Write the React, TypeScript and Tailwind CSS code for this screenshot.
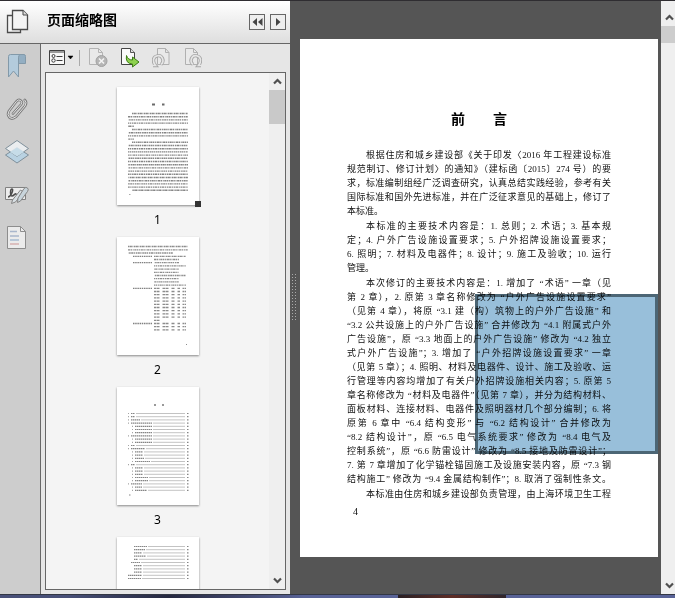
import React, { useState } from 'react';

// One entry per printed line: the document keeps its own line breaks.
const PARAGRAPHS: string[][] = [
  [
    '根据住房和城乡建设部《关于印发〈2016 年工程建设标准',
    '规范制订、修订计划〉的通知》（建标函〔2015〕274 号）的要',
    '求，标准编制组经广泛调查研究，认真总结实践经验，参考有关',
    '国际标准和国外先进标准，并在广泛征求意见的基础上，修订了',
    '本标准。',
  ],
  [
    '本标准的主要技术内容是：1. 总则；2. 术语；3. 基本规',
    '定；4. 户外广告设施设置要求；5. 户外招牌设施设置要求；',
    '6. 照明；7. 材料及电器件；8. 设计；9. 施工及验收；10. 运行',
    '管理。',
  ],
  [
    '本次修订的主要技术内容是：1. 增加了 “术语” 一章（见',
    '第 2 章），2. 原第 3 章名称修改为 “户外广告设施设置要求”',
    '（见第 4 章），将原 “3.1 建（构）筑物上的户外广告设施” 和',
    '“3.2 公共设施上的户外广告设施” 合并修改为 “4.1 附属式户外',
    '广告设施”，原 “3.3 地面上的户外广告设施” 修改为 “4.2 独立',
    '式户外广告设施”；3. 增加了 “户外招牌设施设置要求” 一章',
    '（见第 5 章）；4. 照明、材料及电器件、设计、施工及验收、运',
    '行管理等内容均增加了有关户外招牌设施相关内容；5. 原第 5',
    '章名称修改为 “材料及电器件”（见第 7 章），并分为结构材料、',
    '面板材料、连接材料、电器件及照明器材几个部分编制；6. 将',
    '原第 6 章中 “6.4 结构变形” 与 “6.2 结构设计” 合并修改为',
    '“8.2 结构设计”，原 “6.5 电气系统要求” 修改为 “8.4 电气及',
    '控制系统”，原 “6.6 防雷设计” 修改为 “8.5 接地及防雷设计”；',
    '7. 第 7 章增加了化学锚栓锚固施工及设施安装内容，原 “7.3 钢',
    '结构施工” 修改为 “9.4 金属结构制作”；8. 取消了强制性条文。',
  ],
  ['本标准由住房和城乡建设部负责管理，由上海环境卫生工程'],
];

const DASHES = ['1.5 .4 2 .5 1 .6', '1 .6 2.2 .5 1.4 .7', '2 .5 1.2 .8 1.6 .5', '1.2 .7 1.5 .5 2.4 .6'];

function PagesIcon() {
  return (
    <svg width="24" height="26" viewBox="0 0 24 26" fill="#f4f4f4" stroke="#4b4b4b" strokeWidth="1.3">
      <path d="M2.5 6.5h13v17h-13z" />
      <path d="M7.5 1.5h10.500l4.500 4.500v14.500h-15z" />
      <path d="M18 1.5v4.500h4.500" fill="#ddd" strokeWidth="1" />
    </svg>
  );
}

function BookmarkIcon() {
  return (
    <svg width="20" height="26" viewBox="0 0 20 26" stroke="#8299a9" strokeWidth="1">
      <path d="M4 1.500h13q1.500 0 1.500 2v7h-7V4" fill="#93aec2" />
      <path d="M1.500 24V3.500q0-2 2-2H13q-1.500 1-1.500 3V24l-5-6z" fill="#b3cbdc" />
    </svg>
  );
}

function ClipIcon() {
  const wire = 'M7 16.500 15 7.500q1.800-2.500-.3-4t-4.200.8L3 14q-2.200 4 .5 6.500t6.500-.7L19 9q2.300-3.600-.2-6';
  return (
    <svg width="22" height="24" viewBox="0 0 22 24" fill="none" strokeLinecap="round">
      <path d={wire} stroke="#7c7c7c" strokeWidth="2.600" />
      <path d={wire} stroke="#e2e2e2" strokeWidth="1" />
    </svg>
  );
}

function LayersIcon() {
  return (
    <svg width="26" height="26" viewBox="0 0 26 26" stroke="#7f909b" strokeLinejoin="round">
      <path d="M1.500 16 13 8.500 24.500 16 13 24z" fill="#b9d2e2" />
      <path d="M1.500 9.500 13 1.500l11.500 8L13 17.500z" fill="#eef2f4" fillOpacity=".85" />
      <path d="M6 13 13 8.500l7 4.500-7 4.500z" fill="#c6dce8" stroke="none" />
    </svg>
  );
}

function SignIcon() {
  return (
    <svg width="26" height="20" viewBox="0 0 26 20" fill="none">
      <path d="M1.500 2.500h20v12h-20z" fill="#ececec" stroke="#808080" />
      <path d="M4 12c3 0 6-8 4-8s-2 7 0 7 3-3 4-2 1 2 3 0" stroke="#4c4c4c" strokeWidth="1.500" />
      <path d="m8.500 15 8-10 3 2-8 10-4 1.500z" fill="#d8dfe3" stroke="#858585" />
      <path d="m14 13 6-9.500q2-2 3.500-.5t0 3.500l-7 9.500-3 1.500z" fill="#c8d4db" stroke="#858585" />
    </svg>
  );
}

function ContentIcon() {
  return (
    <svg width="22" height="24" viewBox="0 0 22 24" fill="none">
      <path d="M1.500.500h13l5 5v17h-18z" fill="#ebebeb" stroke="#8d8d8d" />
      <path d="M14.500.500v5h5" stroke="#8d8d8d" />
      <path d="M4 5.500h7M4 10h9" stroke="#a9b6cc" strokeWidth="1.500" />
      <path d="M4 14h9" stroke="#a6bbd2" strokeWidth="1.500" />
      <path d="M4 18h9" stroke="#d6b0b0" strokeWidth="1.500" />
    </svg>
  );
}

function OptionsIcon() {
  return (
    <svg width="25" height="16" viewBox="0 0 25 16" fill="none" stroke="#3f3f3f">
      <path d="M.5.500h15v14H.5z" fill="#f8f8f8" />
      <path d="M.5 2h15" />
      <circle cx="4.500" cy="6" r="1.500" />
      <circle cx="4.500" cy="10.500" r="1.700" />
      <path d="M7.500 6.500h6M7.500 10.500h6" />
      <path d="M19 6h5l-2.500 3z" fill="#000" stroke="#000" strokeWidth=".5" />
    </svg>
  );
}

function DeleteIcon() {
  return (
    <svg width="20" height="20" viewBox="0 0 20 20" fill="none" stroke="#b4b4b4">
      <path d="M1.500.500h9l4 4v12h-13z" fill="#e9e9e9" />
      <path d="M10.500.500v4h4" />
      <circle cx="13.500" cy="13" r="5.500" fill="#b5b5b5" stroke="#a2a2a2" />
      <path d="m11 10.500 5 5m0-5-5 5" stroke="#f4f4f4" strokeWidth="1.600" />
    </svg>
  );
}

function ExtractIcon() {
  return (
    <svg width="20" height="20" viewBox="0 0 20 20" strokeLinejoin="round">
      <path d="M1.500.500h9l4 4v12h-13z" fill="#fafafa" stroke="#444" />
      <path d="M10.500.500v4h4" fill="#ddd" stroke="#555" />
      <path d="M6.500 7.500q-1.500 8 6 8.500v3l6.500-5-6.500-5v3q-4.500 0-6-4.500z" fill="#8ed14f" stroke="#3c7d16" />
    </svg>
  );
}

function RotateIcon({ flip = false }: { flip?: boolean }) {
  const page = flip ? 'M1.500.500h8l4 4v12h-12z' : 'M5.500.500h8l3.500 4v12H5.500z';
  const fold = flip ? 'M9.500.500v4h4' : 'M13.500.500v4H17';
  // horseshoe arrow, drawn twice to get a hollow outline
  const arc = flip ? 'M9 16.500q-3-2.500-1.500-6t5-2.700 4 3.700-2 6h2.500' : 'M9 16.500q3-2.500 1.500-6t-5-2.700-4 3.700 2 6H1';
  return (
    <svg width="18" height="20" viewBox="0 0 18 20" fill="none" stroke="#b0b0b0">
      <path d={page} fill="#e9e9e9" />
      <path d={fold} />
      <path d={arc} stroke="#a6a6a6" strokeWidth="3.400" />
      <path d={arc} stroke="#e6e6e6" strokeWidth="1.600" />
    </svg>
  );
}

function Chevron({ down = false }: { down?: boolean }) {
  return (
    <svg width="9" height="7" viewBox="0 0 9 7" fill="none" stroke="#505050" strokeWidth="2.200">
      <path d={down ? 'm1 1.500 3.500 3.500L8 1.500' : 'M1 5.500 4.500 2 8 5.500'} />
    </svg>
  );
}

function Row({ x1, x2, y, i }: { x1: number; x2: number; y: number; i: number }) {
  return <path d={`M${x1} ${y}H${x2}`} strokeDasharray={DASHES[i % DASHES.length]} strokeDashoffset={i * 1.7} />;
}

function PreviewPreface() {
  const lines = PARAGRAPHS.flatMap(p =>
    p.map((_, i) => ({ indent: i === 0, short: i === p.length - 1 && p.length > 1 && p.length < 10 })),
  );
  return (
    <g stroke="#858585" strokeWidth="1.400">
      <path d="M35 17.500h3M45 17.500h2.500" stroke="#6a6a6a" strokeWidth="2.200" />
      {lines.map((l, i) => (
        <Row key={i} i={i} x1={l.indent ? 15 : 11} x2={l.short ? 17 : 71} y={26.5 + i * 3.2} />
      ))}
      <path d="M12 107.500h1.500" strokeWidth="1" stroke="#aaa" />
    </g>
  );
}

function PreviewCommittee() {
  return (
    <g stroke="#8c8c8c" strokeWidth="1.300">
      <Row i={0} x1={11} x2={71} y={9.5} />
      <Row i={1} x1={11} x2={71} y={12.8} />
      <Row i={2} x1={11} x2={56} y={16} />
      {Array.from({ length: 24 }, (_, i) => {
        const y = 19.3 + i * 3.2;
        if (i < 10) return <Row key={i} i={i} x1={37} x2={i % 3 ? 62 : 69} y={y} />;
        return <path key={i} d={`M37 ${y}H${i === 20 ? 44 : 69}`} strokeDasharray="2 .5 3 3 2.500 .5 3 3 3 3 2.500 2.500" />;
      })}
      <path d="M16 19.300h19M16 25.700h19M16 51.300h19M16 86.500h19" strokeDasharray="1.500 .7" stroke="#808080" />
      <path d="M69 107.500h1" strokeWidth="1" />
    </g>
  );
}

function ContentsRow({ x, y, w }: { x: number; y: number; w: number }) {
  return (
    <g>
      <path d={`M${x} ${y}h${w}`} strokeDasharray="1.500 .5" />
      <path d={`M${x + w + 1} ${y}H68`} strokeWidth=".8" stroke="#b4b4b4" />
      <path d={`M70 ${y}h1.500`} />
    </g>
  );
}

const TOC_WIDTHS = [4, 4, 9, 21, 17, 17, 17, 21, 17, 17, 4, 14, 8, 8, 9, 15, 4, 8, 8, 8, 13, 13, 11, 7, 12];
const TOC_TOP = [0, 1, 2, 3, 7, 10, 11, 16, 22];

function PreviewContents() {
  return (
    <g stroke="#858585" strokeWidth="1.200">
      <path d="M37 18h2M45 18h2" strokeWidth="2" stroke="#999" />
      {TOC_WIDTHS.map((w, i) => {
        const x = TOC_TOP.includes(i) ? 14 : 18;
        const y = 26.5 + i * 3.2;
        return (
          <g key={i}>
            <path d={`M${x - 3} ${y}h1`} stroke="#a5a5a5" />
            <ContentsRow x={x} y={y} w={w} />
          </g>
        );
      })}
      <path d="M12 108h1.500" strokeWidth="1" />
    </g>
  );
}

function PreviewContentsEnd() {
  return (
    <g stroke="#858585" strokeWidth="1.200">
      {[13, 11, 8, 12, 4, 9, 8, 8, 8, 14, 13].map((w, i) => (
        <ContentsRow key={i} x={i > 8 ? 11 : i === 5 ? 14 : 17} y={9.5 + i * 3.2} w={w} />
      ))}
    </g>
  );
}

const THUMBNAILS = [
  { page: 1, Preview: PreviewPreface },
  { page: 2, Preview: PreviewCommittee },
  { page: 3, Preview: PreviewContents },
  { page: 4, Preview: PreviewContentsEnd },
];

const RAIL = [
  { label: '书签', Icon: BookmarkIcon },
  { label: '附件', Icon: ClipIcon },
  { label: '图层', Icon: LayersIcon },
  { label: '签名', Icon: SignIcon },
  { label: '内容', Icon: ContentIcon },
];

function ThumbnailPanel() {
  const [current, setCurrent] = useState(1);

  return (
    <section className="flex min-h-0 min-w-0 flex-1 flex-col border-l border-[#686868] bg-[#e6e6e6] px-1 pb-1">
      <div className="flex h-7 shrink-0 items-center pl-1">
        <button aria-label="选项"><OptionsIcon /></button>
        <span className="ml-[5px] h-4 w-px bg-[#aaa]" />
        <div className="ml-2 flex gap-3">
          <button aria-label="删除页面"><DeleteIcon /></button>
          <button aria-label="提取页面"><ExtractIcon /></button>
          <button aria-label="逆时针旋转"><RotateIcon /></button>
          <button aria-label="顺时针旋转" className="ml-0.5"><RotateIcon flip /></button>
        </div>
      </div>

      <div className="flex min-h-0 flex-1 border border-[#666] bg-[#f4f4f4]">
        <div className="min-w-0 flex-1 overflow-hidden pt-3.5">
          {THUMBNAILS.map(({ page, Preview }) => (
            <button
              key={page}
              onClick={() => setCurrent(page)}
              aria-label={`第 ${page} 页`}
              className="mx-auto flex h-[150px] flex-col items-center"
            >
              <span className="relative block bg-white shadow-[0_1px_2px_#888]">
                <svg width="82" height="118" viewBox="0 0 82 118" fill="none">
                  <Preview />
                </svg>
                {current === page && <span className="absolute -right-0.5 -bottom-0.5 size-1.5 bg-[#333]" />}
              </span>
              {page < 4 && (
                <span className="mt-[5px] font-['Noto_Sans','Noto_Sans_CJK_SC',sans-serif] text-xs leading-5 text-black">{page}</span>
              )}
            </button>
          ))}
        </div>
        <div className="flex w-4 shrink-0 flex-col items-center bg-[#efefef]">
          <button aria-label="向上滚动" className="flex h-[17px] items-center"><Chevron /></button>
          <div className="h-[34px] w-full bg-[#c9c9c9]" />
          <button aria-label="向下滚动" className="mt-auto flex h-[17px] items-center"><Chevron down /></button>
        </div>
      </div>
    </section>
  );
}

function DocumentPage() {
  return (
    <article className="relative mt-[38px] mr-[3px] min-w-0 flex-1 self-start bg-white px-[47px] pt-[71px] pb-[38px] font-['Liberation_Serif','Noto_Sans_CJK_SC',serif] text-[#111]">
      <h2 className="flex justify-center gap-7 text-sm leading-5 font-bold text-black">
        <span>前</span>
        <span>言</span>
      </h2>
      <div className="mt-[18px] text-[9px] leading-[14px]">
        {PARAGRAPHS.map((lines, p) => (
          <p key={p} className="mb-px">
            {lines.map((line, i) => (
              <span
                key={i}
                className={`block whitespace-nowrap ${i === 0 ? 'pl-[19px]' : ''} ${line.length < 8 ? 'text-left' : '[text-align-last:justify]'}`}
              >
                {line}
              </span>
            ))}
          </p>
        ))}
      </div>
      <div className="mt-1 pl-1.5 text-[10px] leading-[14px]">4</div>
      {/* marquee selection drawn over the text */}
      <div className="absolute top-[255px] right-0 h-[160px] w-[183px] border-3 border-[#4c6675] bg-[#98bfda] mix-blend-multiply" />
    </article>
  );
}

export default function App() {
  return (
    <div className="flex h-screen flex-col overflow-hidden bg-[#505887] font-['Noto_Sans','Noto_Sans_CJK_SC',sans-serif]">
      <div className="flex min-h-0 flex-1 border-t border-[#2f2d31]">
        <aside className="flex w-[290px] shrink-0 flex-col bg-[#cdcdcd]">
          <header className="flex h-[43px] shrink-0 items-center border-b border-[#666] bg-linear-to-b from-white to-[#dedede] pr-1">
            <button aria-label="页面" className="flex w-[40px] justify-center pr-1.5"><PagesIcon /></button>
            <h1 className="ml-[7px] flex-1 pb-1 text-sm font-bold text-black">页面缩略图</h1>
            <div className="flex gap-[5px]">
              <button aria-label="折叠" className="flex size-4 items-center justify-center border border-[#666] bg-[#eee]">
                <svg width="11" height="8" viewBox="0 0 11 8" fill="#444"><path d="M5 0v8L.5 4zM10.500 0v8L6 4z" /></svg>
              </button>
              <button aria-label="展开" className="flex size-4 items-center justify-center border border-[#666] bg-[#eee]">
                <svg width="5" height="8" viewBox="0 0 5 8" fill="#444"><path d="M0 0v8l4.500-4z" /></svg>
              </button>
            </div>
          </header>
          <div className="flex min-h-0 flex-1">
            <nav className="flex w-10 shrink-0 flex-col items-center pr-1.5">
              {RAIL.map(({ label, Icon }) => (
                <button key={label} aria-label={label} className="flex h-[43px] items-center justify-center">
                  <Icon />
                </button>
              ))}
            </nav>
            <ThumbnailPanel />
          </div>
        </aside>

        <main className="flex min-w-0 flex-1 bg-[#555]">
          <div className="flex w-2.5 shrink-0 items-center pl-px">
            <svg width="6" height="48" viewBox="0 0 6 48" stroke="#aaa" strokeDasharray="1 2">
              <path d="M1.500 0v48M4.500 0v48" />
            </svg>
          </div>
          <DocumentPage />
          <div className="flex w-3.5 shrink-0 flex-col items-center bg-[#efefef] pt-2">
            <button aria-label="向上滚动" className="flex h-[17px] items-center pl-0.5"><Chevron /></button>
            <div className="h-[17px] w-full bg-[#cdcdcd]" />
            <button aria-label="向下滚动" className="mt-auto flex h-[17px] items-center pl-0.5"><Chevron down /></button>
          </div>
        </main>
      </div>
      <footer className="h-1 shrink-0 border-t border-[#333744] bg-linear-to-r from-[#485078] from-10% via-[#25283f] via-25% to-[#596397] to-45%">
        <div className="ml-[59%] h-full w-[16%] bg-linear-to-r from-[#2a2024] via-[#5f2d26] to-[#30262c]" />
      </footer>
    </div>
  );
}
